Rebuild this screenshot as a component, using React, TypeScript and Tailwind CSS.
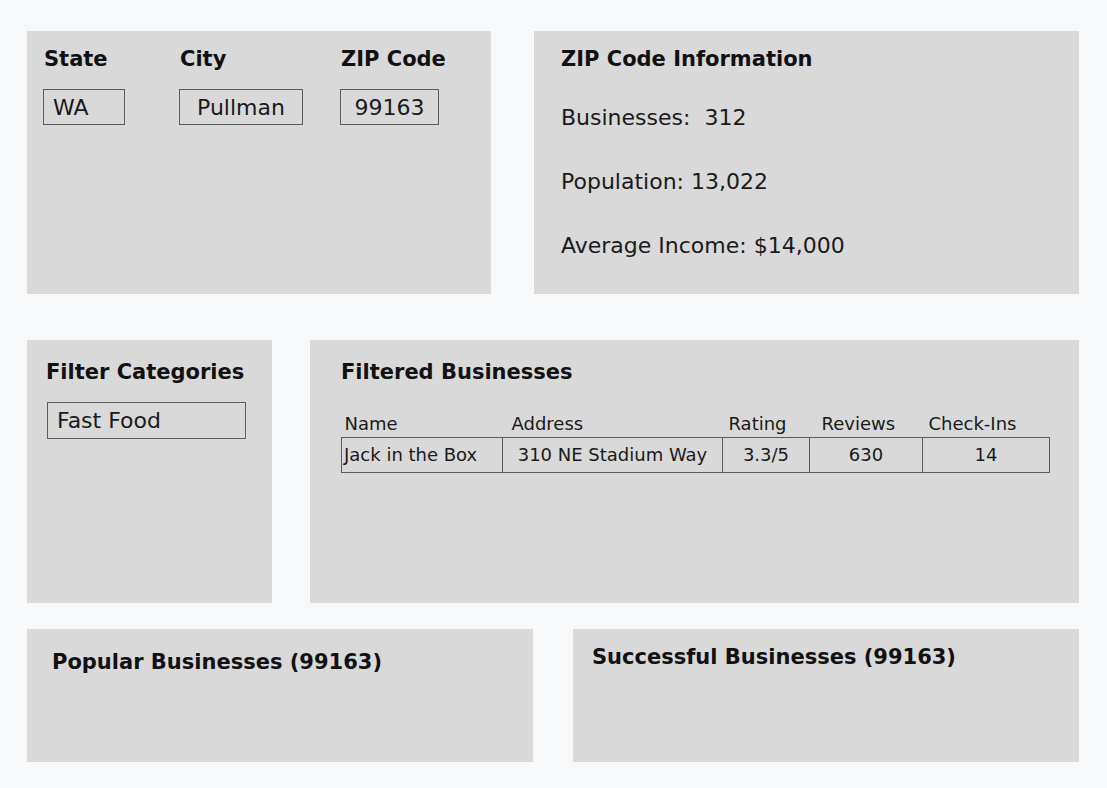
import React from 'react';

const font = { fontFamily: '"DejaVu Sans", Verdana, sans-serif' };

const Field: React.FC<{ label: string; value: string; width: string; boxWidth: string; center?: boolean }> = ({ label, value, width, boxWidth, center }) => (
    <div className={`${width} flex flex-col`}>
        <div className="ml-[1px] text-[21px] leading-[26px] font-bold text-[#111]">{label}</div>
        <div className={`mt-[17px] ${boxWidth} h-[36px] border border-[#5c5c5c] flex items-center text-[22px] text-[#1a1a1a] ${center ? 'justify-center' : 'pl-[9px]'}`}>
            {value}
        </div>
    </div>
);

const columns = [
    { label: 'Name', value: 'Jack in the Box', w: 'w-[161px]', head: 'pl-[3px]', cell: 'text-left pl-[2px]' },
    { label: 'Address', value: '310 NE Stadium Way', w: 'w-[220px]', head: 'pl-[9px]', cell: 'text-center' },
    { label: 'Rating', value: '3.3/5', w: 'w-[87px]', head: 'pl-[6px]', cell: 'text-center' },
    { label: 'Reviews', value: '630', w: 'w-[113px]', head: 'pl-[12px]', cell: 'text-center' },
    { label: 'Check-Ins', value: '14', w: 'w-[127px]', head: 'pl-[6px]', cell: 'text-center' },
];

export default function App() {
    return (
        <div style={font} className="w-[1107px] h-[788px] bg-[#f7f8fa] pt-[31px] pl-[27px] pr-[28px] flex flex-col">
            {/* top row */}
            <div className="flex gap-[43px] h-[263px]">
                <div className="w-[464px] bg-[#d9d9d9] pt-[15px] pl-[16px] flex">
                    <Field label="State" value="WA" width="w-[136px]" boxWidth="w-[82px]" />
                    <Field label="City" value="Pullman" width="w-[161px]" boxWidth="w-[124px]" center />
                    <Field label="ZIP Code" value="99163" width="w-[110px]" boxWidth="w-[99px]" center />
                </div>
                <div className="flex-1 bg-[#d9d9d9] pt-[15px] pl-[27px]">
                    <h2 className="text-[21px] leading-[26px] font-bold text-[#111]">ZIP Code Information</h2>
                    <div className="mt-[32px] flex flex-col gap-[37px] text-[22px] leading-[27px] text-[#1a1a1a]">
                        <div>Businesses:&nbsp; 312</div>
                        <div>Population: 13,022</div>
                        <div>Average Income: $14,000</div>
                    </div>
                </div>
            </div>

            {/* middle row */}
            <div className="mt-[46px] flex gap-[38px] h-[263px]">
                <div className="w-[245px] bg-[#d9d9d9] pt-[19px] pl-[19px]">
                    <h2 className="text-[21px] leading-[26px] font-bold text-[#111]">Filter Categories</h2>
                    <div className="mt-[17px] ml-[1px] w-[199px] h-[37px] border border-[#5c5c5c] flex items-center pl-[9px] text-[22px] text-[#1a1a1a]">
                        Fast Food
                    </div>
                </div>
                <div className="flex-1 bg-[#d9d9d9] pt-[19px] pl-[31px]">
                    <h2 className="text-[21px] leading-[26px] font-bold text-[#111]">Filtered Businesses</h2>
                    <table className="mt-[26px] border-collapse text-[18px] text-[#1a1a1a]">
                        <thead>
                            <tr>
                                {columns.map(c => (
                                    <th key={c.label} className={`${c.w} ${c.head} text-left font-normal leading-[26px] pb-0`}>{c.label}</th>
                                ))}
                            </tr>
                        </thead>
                        <tbody>
                            <tr>
                                {columns.map(c => (
                                    <td key={c.label} className={`${c.cell} h-[35px] border border-[#5c5c5c] leading-none`}>{c.value}</td>
                                ))}
                            </tr>
                        </tbody>
                    </table>
                </div>
            </div>

            {/* bottom row */}
            <div className="mt-[26px] flex gap-[40px] h-[133px]">
                <div className="w-[506px] bg-[#d9d9d9] pt-[20px] pl-[25px]">
                    <h2 className="text-[21px] leading-[26px] font-bold text-[#111]">Popular Businesses (99163)</h2>
                </div>
                <div className="w-[506px] bg-[#d9d9d9] pt-[15px] pl-[19px]">
                    <h2 className="text-[21px] leading-[26px] font-bold text-[#111]">Successful Businesses (99163)</h2>
                </div>
            </div>
        </div>
    );
}
